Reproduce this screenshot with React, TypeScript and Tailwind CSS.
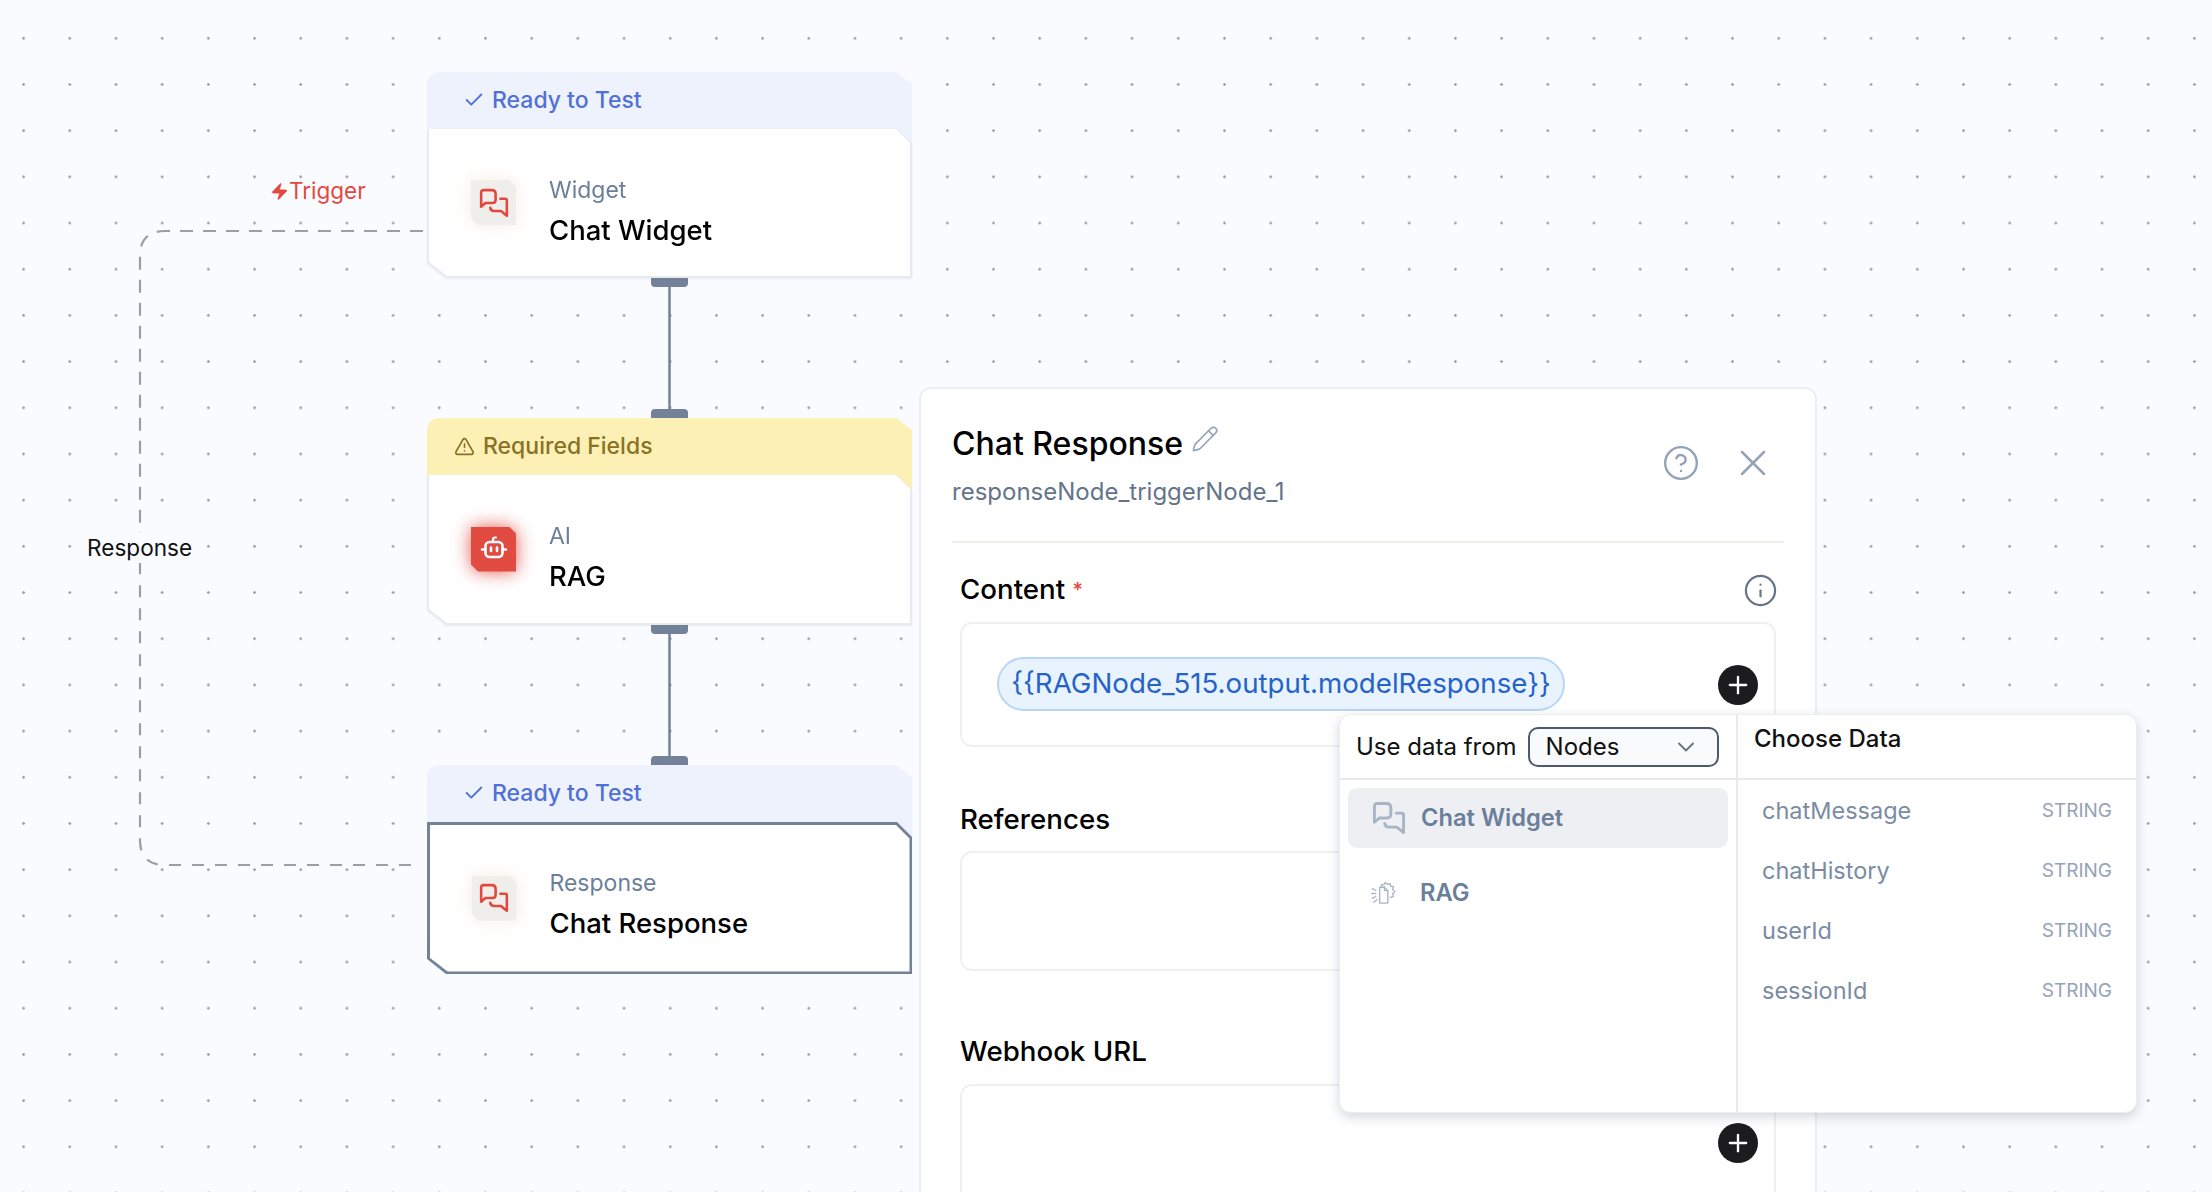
import React from 'react';
import { Check, ChevronDown, CircleHelp, Info, Pencil, Plus, TriangleAlert, X, Zap } from 'lucide-react';

const ChatIcon = ({ className }: { className: string }) => (
  <svg viewBox="0 0 28 28" fill="none" stroke="currentColor" strokeWidth="2.4" strokeLinejoin="round" strokeLinecap="round" className={className}>
    <path d="M2 17.5V4.5Q2 2 4.5 2H12Q15.5 2 15.5 5.5V11Q15.5 14 12.5 14H6Z" />
    <path d="M20 10H24.5Q26 10 26 11.5V26L20.5 21.5H14Q11 21.5 10.5 18.5" />
  </svg>
);

const BotIcon = ({ className }: { className: string }) => (
  <svg viewBox="0 0 28 28" fill="none" className={className}>
    <path d="M13 6.5V4.5Q13 2.5 15 2.5H16" stroke="currentColor" strokeWidth="2.2" strokeLinecap="round" />
    <rect x="5.5" y="7" width="17" height="15" rx="4" stroke="currentColor" strokeWidth="2.6" />
    <path d="M2 14.5H5M23 14.5H26" stroke="currentColor" strokeWidth="2.6" strokeLinecap="round" />
    <path d="M11 12.5V16M17 12.5V16" stroke="currentColor" strokeWidth="2.6" strokeLinecap="round" />
  </svg>
);

const RagIcon = ({ className }: { className: string }) => (
  <svg viewBox="0 0 26 26" fill="none" stroke="currentColor" strokeWidth="1.4" strokeLinecap="round" strokeLinejoin="round" className={className}>
    <path d="M9 6.5H14L17.5 10V23H9Z" />
    <path d="M14 6.5V10H17.5" />
    <path d="M11 6V3.5L13.5 4L15 1.5L17.5 3.5L20 2.5L20.5 5.5L23.5 6L22.5 9L25 11L22.5 13L23.5 16L20 17" />
    <path d="M1.5 8L5 10M1 13H5M1.5 18L5 16M3 22L6 19.5" strokeDasharray="2 1.2" />
  </svg>
);

type NodeProps = {
  pos: string;
  status: 'ready' | 'required';
  kind: string;
  title: string;
  bodyHeight: string;
  active?: boolean;
  solidIcon?: boolean;
};

const cutOuter = '[clip-path:polygon(0_0,calc(100%-15px)_0,100%_15px,100%_100%,19px_100%,0_calc(100%-15px))]';
const cutInner = '[clip-path:polygon(0_0,calc(100%-14px)_0,100%_14px,100%_100%,18px_100%,0_calc(100%-14px))]';

const FlowNode = ({ pos, status, kind, title, bodyHeight, active, solidIcon }: NodeProps) => {
  const ready = status === 'ready';
  return (
    <div className={`absolute w-[485px] ${pos}`}>
      <div className={`absolute left-[224px] top-[-9px] h-[9px] w-[37px] rounded-t-[4px] bg-[#738299] ${kind === 'Widget' ? 'hidden' : ''}`} />
      <div className={`absolute bottom-[-9px] left-[224px] h-[9px] w-[37px] rounded-b-[4px] bg-[#738299] ${kind === 'Response' ? 'hidden' : ''}`} />
      <div className={`-mb-[15px] h-[72px] rounded-tl-[12px] [clip-path:polygon(0_0,calc(100%-16px)_0,100%_12px,100%_100%,0_100%)] ${ready ? 'bg-[#eef2fd] text-[#5070d8]' : 'bg-[#fcf0b5] text-[#8a7225]'}`}>
        <div className={`flex h-[56px] items-center text-[23px] font-medium ${ready ? 'gap-[7px] pl-[36px]' : 'gap-[8px] pl-[27px]'}`}>
          {ready ? <Check size={22} strokeWidth={2} /> : <TriangleAlert size={21} strokeWidth={1.8} />}
          <span>{title === 'RAG' ? 'Required Fields' : 'Ready to Test'}</span>
        </div>
      </div>
      <div className={active ? '' : 'drop-shadow-[0_1px_1px_rgba(60,70,90,0.08)]'}>
        <div className={`relative ${cutOuter} ${bodyHeight} ${active ? 'bg-[#738299] p-[2.5px]' : 'bg-[#e8eaef] px-[2px] pb-[2px]'}`}>
          <div className={`flex h-full items-center gap-[33px] bg-white pl-[42px] ${cutInner}`}>
            <div className={solidIcon ? 'drop-shadow-[0_0_9px_rgba(226,72,63,0.9)]' : 'drop-shadow-[0_0_8px_rgba(226,200,170,0.35)]'}>
              <div className={`flex h-[45px] w-[45px] items-center justify-center [clip-path:polygon(0_0,calc(100%-7px)_0,100%_7px,100%_100%,7px_100%,0_calc(100%-7px))] ${solidIcon ? 'bg-[#e14b42] text-white' : 'bg-[#f0eeea] text-[#e2483f]'}`}>
                {solidIcon ? <BotIcon className="h-[28px] w-[28px]" /> : <ChatIcon className="h-[30px] w-[30px]" />}
              </div>
            </div>
            <div className={`flex flex-col gap-[10px] ${active ? 'mt-[14px]' : 'mt-[18px]'}`}>
              <span className="text-[23px] leading-[26px] text-[#6b7f9b]">{kind}</span>
              <span className="text-[27.5px] font-medium leading-[34px] text-black">{title}</span>
            </div>
          </div>
        </div>
      </div>
    </div>
  );
};

const AddButton = () => (
  <div className="flex h-[40px] w-[40px] items-center justify-center rounded-full bg-[#1c1c1e] text-white">
    <Plus size={28} strokeWidth={2} />
  </div>
);

const FieldLabel = ({ children }: { children: React.ReactNode }) => (
  <div className="text-[27.7px] font-medium leading-[34px] text-black">{children}</div>
);

const fields = ['chatMessage', 'chatHistory', 'userId', 'sessionId'];

export default function App() {
  return (
    <div className="relative h-[1192px] w-[2212px] overflow-hidden bg-[#fafbfe] bg-[radial-gradient(circle,#9aa0aa_1.1px,transparent_1.5px)] bg-[size:46.2px_46.2px] bg-[position:0.5px_15.2px] font-['Inter',sans-serif]">
      {/* edges */}
      <svg className="absolute left-0 top-0" width="2212" height="1192" fill="none">
        <path d="M423 231H165Q140 231 140 256V548" stroke="#9a9ea6" strokeWidth="2.2" strokeDasharray="13 10" />
        <path d="M411 865H165Q140 865 140 840V548" stroke="#9a9ea6" strokeWidth="2.2" strokeDasharray="12 11" />
        <path d="M669.5 280V412M669.5 628V760" stroke="#738299" strokeWidth="2.5" />
      </svg>

      <div className="absolute left-[270px] top-[176px] flex items-center text-[22.5px] leading-[30px] text-[#e2483f]">
        <Zap size={19} fill="currentColor" strokeWidth={1} />
        <span>Trigger</span>
      </div>
      <div className="absolute left-[87px] top-[533px] bg-[#fafbfe] py-[2px] text-[22.6px] leading-[26px] text-[#111]">Response</div>

      <FlowNode pos="left-[427px] top-[72px]" status="ready" kind="Widget" title="Chat Widget" bodyHeight="h-[149px]" />
      <FlowNode pos="left-[427px] top-[418px]" status="required" kind="AI" title="RAG" bodyHeight="h-[150px]" solidIcon />
      <FlowNode pos="left-[427px] top-[765px]" status="ready" kind="Response" title="Chat Response" bodyHeight="h-[152px]" active />

      {/* config panel */}
      <div className="absolute left-[919px] top-[387px] h-[850px] w-[898px] rounded-[12px] border-2 border-[#eceef2] bg-white pl-[31px] pr-[31px] pt-[33px]">
        <div className="flex items-start justify-between border-b-2 border-[#f2efea] pb-[33px]">
          <div>
            <div className="flex items-start gap-[8px]">
              <span className="text-[32px] font-medium leading-[44px] text-black">Chat Response</span>
              <Pencil size={28} strokeWidth={1.4} className="mt-[3px] text-[#94a3b8]" />
            </div>
            <div className="mt-[10px] text-[24px] leading-[32px] text-[#64748b]">responseNode_triggerNode_1</div>
          </div>
          <div className="mr-[9px] mt-[19px] flex items-center gap-[31px] text-[#94a3b8]">
            <CircleHelp size={38} strokeWidth={1.5} />
            <X size={44} strokeWidth={1.35} />
          </div>
        </div>

        <div className="px-[8px]">
          <div className="mt-[29px] flex items-center justify-between">
            <FieldLabel>
              Content <span className="relative -top-[2px] text-[20px] text-[#e2483f]">*</span>
            </FieldLabel>
            <Info size={35} strokeWidth={1.5} className="mr-[-2px] text-[#64748b]" />
          </div>
          <div className="mt-[13px] flex h-[125px] items-start justify-between rounded-[12px] border-2 border-[#eff0f4] pl-[35px] pr-[16px] pt-[33px]">
            <div className="flex h-[54px] w-[568px] items-center justify-center rounded-full border-2 border-[#b8d6fa] bg-[#e9f3fe] text-[27.7px] text-[#2563c9]">
              {'{{RAGNode_515.output.modelResponse}}'}
            </div>
            <div className="mt-[8px]">
              <AddButton />
            </div>
          </div>

          <div className="mt-[55px]">
            <FieldLabel>References</FieldLabel>
          </div>
          <div className="mt-[15px] h-[120px] rounded-[12px] border-2 border-[#eff0f4]" />

          <div className="mt-[63px]">
            <FieldLabel>Webhook URL</FieldLabel>
          </div>
          <div className="mt-[16px] flex h-[160px] items-start justify-end rounded-[12px] border-2 border-[#eff0f4] pr-[16px] pt-[37px]">
            <AddButton />
          </div>
        </div>
      </div>

      {/* data picker */}
      <div className="absolute left-[1339px] top-[714px] grid h-[399px] w-[798px] grid-cols-[398px_1fr] overflow-hidden rounded-[12px] border border-[#eceef2] bg-white shadow-[0_4px_12px_rgba(60,70,90,0.22)]">
        <div className="border-r-2 border-[#e9eaee]">
          <div className="flex h-[65px] items-center gap-[11px] border-b-2 border-[#e9eaee] pl-[16px]">
            <span className="text-[24px] text-[#111]">Use data from</span>
            <div className="flex h-[40px] w-[191px] items-center justify-between rounded-[10px] border-2 border-[#4b5a70] bg-[#f8fafc] pl-[16px] pr-[17px] text-[24px] text-[#111]">
              <span>Nodes</span>
              <ChevronDown size={28} strokeWidth={1.6} className="text-[#6b7280]" />
            </div>
          </div>
          <div className="px-[8px] pt-[8px]">
            <div className="flex h-[60px] w-[380px] items-center gap-[15px] rounded-[9px] bg-[#eeeff3] pl-[24px]">
              <ChatIcon className="h-[34px] w-[34px] text-[#a9b5c5]" />
              <span className="text-[23.7px] font-semibold text-[#6b7f9b]">Chat Widget</span>
            </div>
            <div className="mt-[15px] flex h-[60px] items-center gap-[24px] pl-[23px]">
              <RagIcon className="h-[25px] w-[25px] text-[#a9b5c5]" />
              <span className="text-[23.7px] font-semibold text-[#6b7f9b]">RAG</span>
            </div>
          </div>
        </div>
        <div>
          <div className="h-[65px] border-b-2 border-[#e9eaee] pl-[16px] pt-[8px] text-[24px] font-medium leading-[32px] text-[#111]">Choose Data</div>
          <div className="pt-[1px]">
            {fields.map((field) => (
              <div key={field} className="flex h-[60px] items-center justify-between pl-[24px] pr-[24px]">
                <span className="text-[23.5px] text-[#7a8ba3]">{field}</span>
                <span className="text-[19px] text-[#94a3b8]">STRING</span>
              </div>
            ))}
          </div>
        </div>
      </div>
    </div>
  );
}
